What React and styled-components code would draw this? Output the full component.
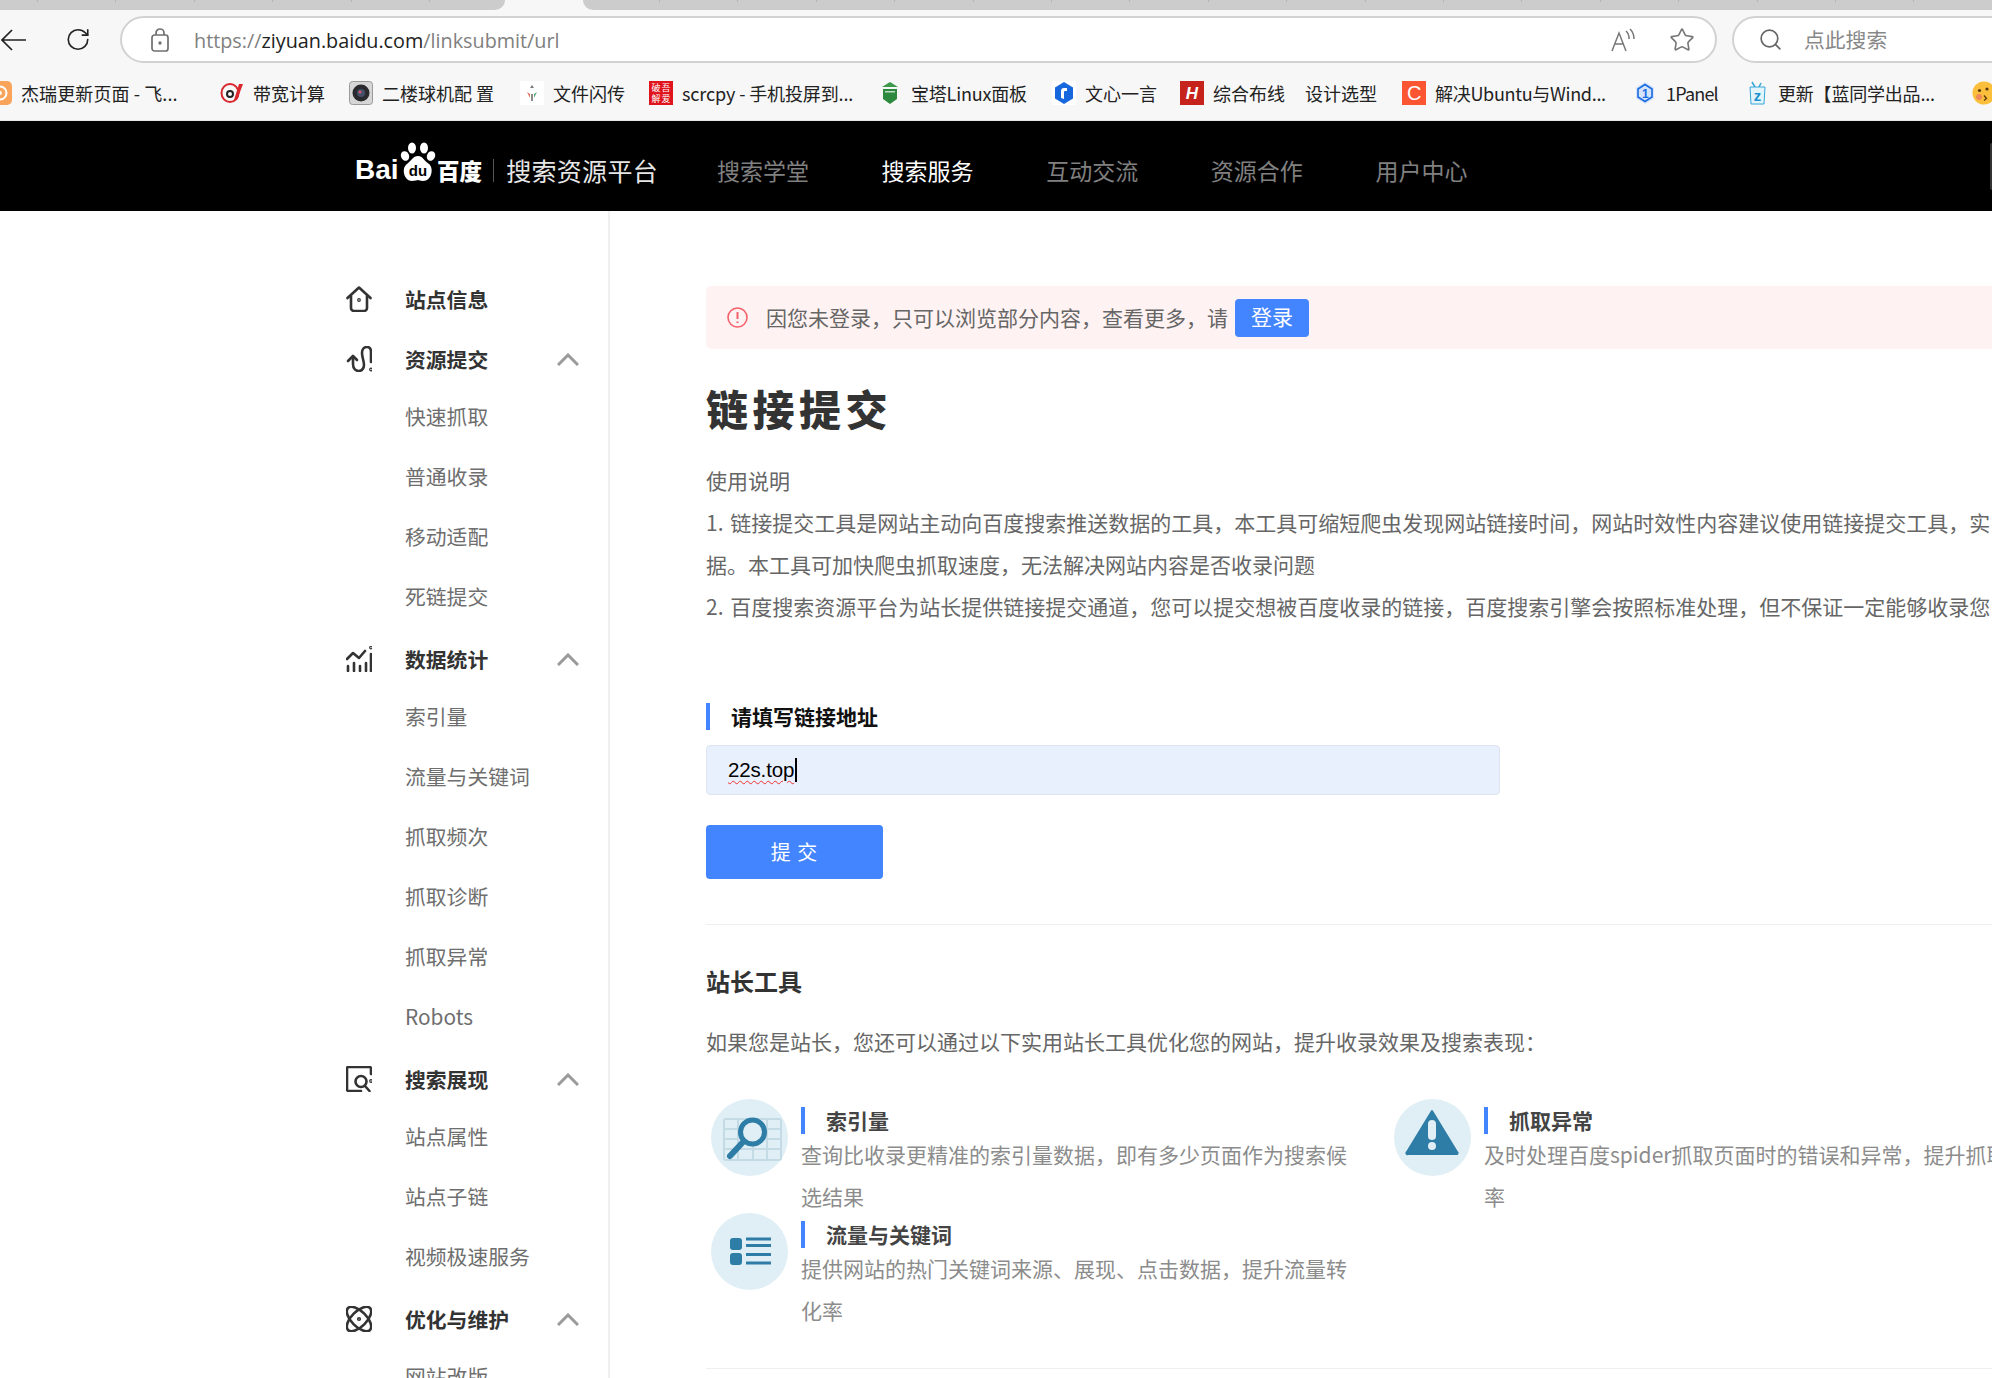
import React from 'react';
import styled, { createGlobalStyle } from 'styled-components';
import { RotateCw, Search, Star } from 'lucide-react';

const GlobalStyle = createGlobalStyle`
  html, body {
    margin: 0;
    padding: 0;
    width: 1992px;
    height: 1378px;
    overflow: hidden;
    background: #fff;
  }
  * {
    box-sizing: border-box;
  }
  body {
    font-family: "Noto Sans CJK SC", "Noto Sans", sans-serif;
  }
`;

const Page = styled.div`
  width: 1992px;
  height: 1378px;
  overflow: hidden;
  display: flex;
  flex-direction: column;
`;

/* browser chrome */
const Chrome = styled.div`
  height: 121px;
  flex: none;
  background: #f7f7f7;
  border-bottom: 1px solid #e6e6e6;
`;

const TabStrip = styled.div`
  height: 10px;
  display: flex;
  gap: 78px;
`;

const Tab = styled.div`
  height: 10px;
  background-color: #cccccc;
  background-image: repeating-linear-gradient(
    to right,
    transparent 0,
    transparent ${(p) => p.$offset}px,
    #b4b4b4 ${(p) => p.$offset}px,
    #b4b4b4 ${(p) => p.$offset + 1}px,
    transparent ${(p) => p.$offset + 1}px,
    transparent 78.4px
  );
  background-size: 100% 2px;
  background-repeat: no-repeat;
  width: ${(p) => p.$width};
  flex: ${(p) => (p.$grow ? 1 : 'none')};
  border-radius: ${(p) => (p.$grow ? '0 0 0 12px' : '0 0 12px 0')};
`;

const AddressRow = styled.div`
  height: 60px;
  display: flex;
  align-items: flex-start;
  padding: 6px 0 0 1px;
`;

const NavButton = styled.div`
  width: 26px;
  height: 47px;
  display: flex;
  align-items: center;
  justify-content: center;
  color: #222;
  margin-right: ${(p) => p.$gap}px;
`;

const AddressBar = styled.div`
  width: 1597px;
  height: 47px;
  flex: none;
  background: #fff;
  border: 2px solid #d2d2d2;
  border-radius: 24px;
  display: flex;
  align-items: center;
  padding: 0 20px 0 29px;
  color: #808080;
`;

const Url = styled.div`
  margin-left: 25px;
  font-family: "Open Sans", "Noto Sans", sans-serif;
  font-size: 19.8px;
  padding-top: 1px;
  color: #808080;
  white-space: nowrap;
  flex: 1;
  b {
    font-weight: 400;
    color: #222;
  }
`;

const BarIcons = styled.div`
  display: flex;
  align-items: center;
  gap: 34px;
`;

const SearchBox = styled.div`
  margin-left: 15px;
  width: 300px;
  height: 47px;
  flex: none;
  background: #fff;
  border: 2px solid #d2d2d2;
  border-radius: 24px;
  display: flex;
  align-items: center;
  padding-left: 24px;
  gap: 21px;
  color: #666;
  font-size: 20.8px;
  span {
    color: #888;
    margin-top: -1px;
  }
`;

const Bookmarks = styled.div`
  height: 50px;
  margin-left: -12px;
  display: flex;
  align-items: center;
  padding-bottom: 4px;
`;

const Bookmark = styled.div`
  width: ${(p) => p.$width}px;
  flex: none;
  display: flex;
  align-items: center;
  gap: 9px;
  font-size: 18px;
  letter-spacing: ${(p) => p.$spacing || 0}px;
  color: #222;
  white-space: nowrap;
  svg {
    flex: none;
  }
`;

/* black site header */
const Header = styled.header`
  height: 90px;
  flex: none;
  background: #000;
  display: flex;
  align-items: center;
  padding: 7px 0 0 355px;
`;

const Logo = styled.div`
  display: flex;
  align-items: center;
  color: #fff;
  height: 40px;
  width: 303px;
  flex: none;
`;

const LogoLatin = styled.span`
  font-family: "Liberation Sans", sans-serif;
  font-weight: 700;
  font-size: 28px;
  width: 43px;
  margin-top: 1px;
`;

const LogoPaw = styled.svg`
  flex: none;
  margin-top: -16px;
`;

const LogoHan = styled.span`
  font-weight: 900;
  font-size: 22.5px;
  margin-left: 1px;
  width: 46px;
  white-space: nowrap;
`;

const LogoDivider = styled.i`
  width: 1px;
  height: 23px;
  background: #555;
  margin: 2px 13px 0 11px;
`;

const LogoTitle = styled.span`
  font-size: 25px;
  letter-spacing: 0.3px;
  color: #e6e6e6;
  white-space: nowrap;
`;

const HeaderLinks = styled.nav`
  display: flex;
  gap: 72.6px;
  margin-left: 59px;
`;

const HeaderLink = styled.a`
  font-size: 23px;
  color: ${(p) => (p.$active ? '#fff' : '#808080')};
  white-space: nowrap;
`;

const HeaderEdge = styled.div`
  margin-left: auto;
  width: 2px;
  height: 47px;
  margin-top: -7px;
  background: #333;
  border-radius: 2px 0 0 2px;
`;

/* page body */
const Body = styled.div`
  flex: 1;
  display: flex;
  min-height: 0;
`;

const Sidebar = styled.aside`
  width: 610px;
  flex: none;
  border-right: 2px solid #f0f0f0;
  padding: 61px 29px 0 346px;
`;

const MenuGroup = styled.div`
  margin-bottom: 6px;
`;

const MenuHead = styled.div`
  height: 54px;
  display: flex;
  align-items: center;
  color: #333;
  font-size: 20.8px;
  font-weight: 700;
  svg.menu-icon {
    margin-right: 33px;
    flex: none;
  }
  svg.chevron {
    margin-left: auto;
  }
`;

const MenuItem = styled.div`
  height: 60px;
  line-height: 60px;
  padding-left: 59px;
  font-size: 20.8px;
  color: #6e6e6e;
  white-space: nowrap;
`;

const Main = styled.main`
  flex: 1;
  min-width: 0;
  overflow: hidden;
  padding: 75px 0 0 96px;
`;

const Alert = styled.div`
  height: 63px;
  background: #fff2f2;
  border-radius: 5px 0 0 5px;
  display: flex;
  align-items: center;
  padding: 0 0 0 21px;
  color: #666;
  font-size: 21px;
  line-height: 59px;
  white-space: nowrap;
  svg {
    margin-right: 18px;
  }
`;

const LoginButton = styled.span`
  margin-left: 7px;
  width: 74px;
  height: 38px;
  line-height: 35px;
  text-align: center;
  color: #fff;
  background: #4285ff;
  border-radius: 4px;
`;

const Title = styled.h1`
  margin: 29px 0 0;
  height: 60px;
  line-height: 60px;
  font-size: 42px;
  letter-spacing: 4.5px;
  font-weight: 900;
  color: #333;
`;

const Guide = styled.div`
  margin-top: 21px;
  font-size: 21px;
  line-height: 42px;
  word-spacing: 2px;
  color: #666;
  white-space: nowrap;
`;

const FieldLabel = styled.div`
  margin-top: 76px;
  height: 27px;
  line-height: 27px;
  border-left: 4px solid #4285ff;
  padding-left: 21px;
  font-size: 21px;
  font-weight: 700;
  color: #111;
`;

const Field = styled.div`
  margin-top: 15px;
  width: 794px;
  height: 50px;
  background: #e8f0fe;
  border: 1px solid #dfe4ee;
  border-radius: 4px;
  display: flex;
  align-items: center;
  padding-left: 21px;
  font-family: "Liberation Sans", sans-serif;
  font-size: 20.5px;
  letter-spacing: -0.15px;
  color: #000;
`;

const Misspelled = styled.span`
  text-decoration: underline wavy #f03030 1px;
  text-underline-offset: 3px;
`;

const Caret = styled.i`
  width: 2px;
  height: 24px;
  margin-left: 1px;
  background: #000;
`;

const SubmitButton = styled.div`
  margin-top: 30px;
  width: 177px;
  height: 54px;
  line-height: 54px;
  text-align: center;
  background: #4285ff;
  border-radius: 4px;
  color: #fff;
  font-size: 20px;
  letter-spacing: 1px;
`;

const Rule = styled.div`
  height: 1px;
  background: #eeeeee;
  margin-top: ${(p) => p.$top}px;
`;

const SectionTitle = styled.h2`
  margin: 36px 0 0;
  height: 40px;
  line-height: 40px;
  font-size: 24px;
  font-weight: 700;
  color: #333;
`;

const SectionText = styled.p`
  margin: 19px 0 0;
  line-height: 42px;
  font-size: 21px;
  color: #666;
  white-space: nowrap;
`;

const ToolGrid = styled.div`
  margin-top: 37px;
  display: grid;
  grid-template-columns: 683px 600px;
  grid-auto-rows: 114px;
`;

const Tool = styled.div`
  display: flex;
  align-items: flex-start;
  padding-left: 5px;
`;

const ToolDisc = styled.div`
  width: 77px;
  height: 77px;
  flex: none;
  border-radius: 50%;
  background: #e0eff5;
  margin-right: 13px;
`;

const ToolBody = styled.div`
  width: 546px;
  flex: none;
  padding-top: 8px;
`;

const ToolName = styled.div`
  height: 27px;
  line-height: 27px;
  border-left: 4px solid #4285ff;
  padding-left: 21px;
  font-size: 21px;
  font-weight: 700;
  color: #444;
`;

const ToolText = styled.div`
  margin-top: -1px;
  line-height: 42px;
  font-size: 21px;
  color: #8c8c8c;
`;

const Icon26 = ({ children }) => (
  <svg className="menu-icon" width="26" height="26" viewBox="0 0 26 26" fill="none" stroke="#333" strokeWidth="2.6" strokeLinecap="round" strokeLinejoin="round">
    {children}
  </svg>
);

const menuIcons = {
  home: (
    <Icon26>
      <path d="M1.500 12 13 1.500 24.500 12" />
      <path d="M5 10v12a3 3 0 0 0 3 3h10a3 3 0 0 0 3-3V10" />
      <circle cx="13" cy="14" r=".6" />
    </Icon26>
  ),
  submit: (
    <Icon26>
      <path d="M2 15l5-5 4 4" />
      <path d="M7 11v7c0 5 3 7 6 7s5-3 5-6c0-4-2-8-2-12s2-6 5-6 4 2 4 5v10" />
      <circle cx="25" cy="23.500" r=".6" />
    </Icon26>
  ),
  stats: (
    <Icon26>
      <path d="M1 13l6-6 6 5 6-7" />
      <circle cx="25" cy="1.500" r=".6" />
      <path d="M2 20v5M8 17v8M14 20v5M20 17v8M25 8v17" />
    </Icon26>
  ),
  search: (
    <Icon26>
      <path d="M25 8V2.500A1.500 1.500 0 0 0 23.500 1h-21A1.500 1.500 0 0 0 1 2.500v21A1.500 1.500 0 0 0 2.500 25H15" />
      <circle cx="15" cy="15.500" r="5.500" />
      <path d="M19 20l4.500 5" />
      <circle cx="25" cy="15" r=".6" />
    </Icon26>
  ),
  optimize: (
    <Icon26>
      <ellipse cx="13" cy="13" rx="15.500" ry="7.500" transform="rotate(45 13 13)" />
      <ellipse cx="13" cy="13" rx="15.500" ry="7.500" transform="rotate(-45 13 13)" />
      <circle cx="13" cy="13" r=".8" />
    </Icon26>
  ),
};

const Chevron = () => (
  <svg className="chevron" width="22" height="13" viewBox="0 0 22 13" fill="none" stroke="#9a9a9a" strokeWidth="3">
    <path d="M1 12 11 2l10 10" />
  </svg>
);

const bookmarkIcons = {
  orange: (
    <svg width="24" height="24" viewBox="0 0 24 24">
      <rect width="24" height="24" rx="5" fill="#f9a45a" />
      <circle cx="12" cy="12" r="6.500" fill="none" stroke="#fff" strokeWidth="2" />
      <circle cx="12" cy="12" r="2" fill="#fff" />
    </svg>
  ),
  at: (
    <svg width="24" height="24" viewBox="0 0 24 24">
      <ellipse cx="10" cy="12" rx="8.500" ry="9" fill="none" stroke="#d8272d" strokeWidth="2" />
      <circle cx="10" cy="13" r="3" fill="none" stroke="#222" strokeWidth="2" />
      <path d="M19 3h4l-6 16h-3z" fill="#d8272d" />
    </svg>
  ),
  camera: (
    <svg width="24" height="24" viewBox="0 0 24 24">
      <rect x=".5" y=".5" width="23" height="23" rx="3" fill="#d6d6d6" stroke="#9a9a9a" />
      <circle cx="12" cy="12" r="8.500" fill="#2a2a2e" />
      <circle cx="12" cy="12" r="4" fill="#44506a" />
      <circle cx="11" cy="11" r="1.500" fill="#d9566a" />
    </svg>
  ),
  flash: (
    <svg width="24" height="24" viewBox="0 0 24 24">
      <rect width="24" height="24" fill="#fff" />
      <path d="M12 4l2 3h-4z" fill="#7a7a7a" />
      <path d="M7 11l3 2v4z" fill="#e0705a" />
      <path d="M17 11l-3 2v4z" fill="#58a878" />
      <path d="M11 13h2v7h-2z" fill="#8a8a8a" />
    </svg>
  ),
  seal: (
    <svg width="24" height="24" viewBox="0 0 24 24">
      <rect width="24" height="24" fill="#e0141c" />
      <g fill="#fff" fontSize="9" fontFamily="Noto Sans CJK SC">
        <text x="2.500" y="10">破</text>
        <text x="12.500" y="10">吾</text>
        <text x="2.500" y="21">解</text>
        <text x="12.500" y="21">爱</text>
      </g>
    </svg>
  ),
  shield: (
    <svg width="24" height="24" viewBox="0 0 24 24">
      <path d="M12 1 20 6H4z" fill="#3d9a4c" />
      <path d="M5 8h14v10l-7 5-7-5z" fill="#2c8a3e" />
      <path d="M7 10h10v1.500H7z" fill="#fff" opacity=".7" />
    </svg>
  ),
  wenxin: (
    <svg width="24" height="24" viewBox="0 0 24 24">
      <rect width="24" height="24" fill="#fff" />
      <path d="M12 1 21 6.500v11L12 23l-9-5.500v-11z" fill="#1668dc" />
      <path d="M9 17V10a3 3 0 0 1 3-3h3v3h-2a1 1 0 0 0-1 1v7z" fill="#fff" />
    </svg>
  ),
  hsquare: (
    <svg width="24" height="24" viewBox="0 0 24 24">
      <rect width="24" height="24" fill="#c6231c" />
      <text x="12" y="18" fill="#fff" fontSize="17" fontWeight="700" fontStyle="italic" textAnchor="middle" fontFamily="Liberation Sans">H</text>
    </svg>
  ),
  csquare: (
    <svg width="24" height="24" viewBox="0 0 24 24">
      <rect width="24" height="24" fill="#fc5531" />
      <text x="12" y="19" fill="#fff" fontSize="20" textAnchor="middle" fontFamily="Liberation Sans">C</text>
    </svg>
  ),
  panel: (
    <svg width="24" height="24" viewBox="0 0 24 24">
      <path d="M12 1 21 6.500v11L12 23l-9-5.500v-11z" fill="#d5e4fb" />
      <path d="M12 3.500 19 8v8l-7 4.500L5 16V8z" fill="none" stroke="#1a6ae0" strokeWidth="1.600" />
      <text x="12" y="16.500" fill="#1a6ae0" fontSize="12" fontWeight="700" textAnchor="middle" fontFamily="Liberation Sans">1</text>
    </svg>
  ),
  tv: (
    <svg width="24" height="24" viewBox="0 0 24 24">
      <path d="M7 1l3 5M16 2l-2 4" stroke="#35a6d8" strokeWidth="1.500" />
      <path d="M5 6h15l-1 17H6z" fill="#e3f4fb" stroke="#35a6d8" />
      <text x="12.500" y="20" fill="#1d92cc" fontSize="15" fontWeight="700" textAnchor="middle" fontFamily="Liberation Sans">z</text>
    </svg>
  ),
  face: (
    <svg width="24" height="24" viewBox="0 0 24 24">
      <circle cx="12" cy="12" r="11.500" fill="#fbbf3c" />
      <circle cx="7.500" cy="9.500" r="1.600" fill="#5b3a12" />
      <circle cx="15" cy="8" r="1.600" fill="#5b3a12" />
      <circle cx="7" cy="16" r="3" fill="#f08a5a" />
      <path d="M12 14.500l2.500 3-2.500 2" fill="none" stroke="#5b3a12" strokeWidth="1.300" />
    </svg>
  ),
};

const bookmarks = [
  { icon: 'orange', text: '杰瑞更新页面 - 飞...', width: 232, spacing: 0.1 },
  { icon: 'at', text: '带宽计算', width: 129 },
  { icon: 'camera', text: '二楼球机配 置', width: 171 },
  { icon: 'flash', text: '文件闪传', width: 129 },
  { icon: 'seal', text: 'scrcpy - 手机投屏到...', width: 229, spacing: -0.13 },
  { icon: 'shield', text: '宝塔Linux面板', width: 174, spacing: -0.2 },
  { icon: 'wenxin', text: '文心一言', width: 128 },
  { icon: 'hsquare', text: '综合布线', width: 125 },
  { text: '设计选型', width: 97 },
  { icon: 'csquare', text: '解决Ubuntu与Wind...', width: 231, spacing: -0.3 },
  { icon: 'panel', text: '1Panel', width: 112, spacing: -0.8 },
  { icon: 'tv', text: '更新【蓝同学出品...', width: 227, spacing: -0.2 },
  { icon: 'face', text: '', width: 24 },
];

const menu = [
  { icon: 'home', title: '站点信息' },
  { icon: 'submit', title: '资源提交', items: ['快速抓取', '普通收录', '移动适配', '死链提交'] },
  { icon: 'stats', title: '数据统计', items: ['索引量', '流量与关键词', '抓取频次', '抓取诊断', '抓取异常', 'Robots'] },
  { icon: 'search', title: '搜索展现', items: ['站点属性', '站点子链', '视频极速服务'] },
  { icon: 'optimize', title: '优化与维护', items: ['网站改版'] },
];

const IndexArt = () => (
  <svg width="77" height="77" viewBox="0 0 77 77">
    <g fill="none" stroke="#c4dbe6" strokeWidth="2">
      <rect x="13" y="20" width="57" height="41" rx="2" />
      <path d="M13 30h57M13 40h57M13 50h57M27 20v41M42 20v41M56 20v41" />
    </g>
    <circle cx="41.500" cy="33" r="12" fill="#e0eff5" stroke="#2e7da6" strokeWidth="5" />
    <path d="M32 43 19 57" stroke="#2e7da6" strokeWidth="6" strokeLinecap="round" />
  </svg>
);

const ListArt = () => (
  <svg width="77" height="77" viewBox="0 0 77 77" fill="#2e7da6">
    <rect x="19" y="25" width="12" height="12" rx="3" />
    <rect x="19" y="40" width="12" height="12" rx="3" />
    <path d="M35 24.500h25v3H35zM35 31h25v3H35zM35 40h25v3H35zM35 48.500h25v3H35z" />
  </svg>
);

const WarnArt = () => (
  <svg width="77" height="77" viewBox="0 0 77 77">
    <path d="M38 12 63 53a1 1 0 0 1-1 2H14a1 1 0 0 1-1-2z" fill="#2e7da6" stroke="#2e7da6" strokeWidth="2" strokeLinejoin="round" />
    <rect x="34" y="21" width="8" height="20" rx="4" fill="#e0eff5" />
    <circle cx="38" cy="47" r="4" fill="#e0eff5" />
  </svg>
);

export default function App() {
  return (
    <Page>
      <GlobalStyle />
      <Chrome>
        <TabStrip>
          <Tab $width="505px" $offset={37} />
          <Tab $grow $offset={76} />
        </TabStrip>
        <AddressRow>
          <NavButton $gap={39}>
            <svg width="25" height="24" viewBox="0 0 25 24" fill="none" stroke="#222" strokeWidth="1.700">
              <path d="M25 12H1M11 2 1 12l10 10" />
            </svg>
          </NavButton>
          <NavButton $gap={29}>
            <RotateCw size={29} strokeWidth={1.5} />
          </NavButton>
          <AddressBar>
            <svg width="18" height="24" viewBox="0 0 18 24" fill="none" stroke="#707070" strokeWidth="1.700">
              <rect x="1" y="7" width="16" height="16" rx="2.500" />
              <path d="M5 7V5a4 4 0 0 1 8 0v2" />
              <circle cx="9" cy="15" r=".8" fill="#707070" />
            </svg>
            <Url>
              https://<b>ziyuan.baidu.com</b>/linksubmit/url
            </Url>
            <BarIcons>
              <svg width="24" height="24" viewBox="0 0 24 24" fill="none" stroke="#777" strokeWidth="1.500">
                <path d="M1 23 8 5l7 18M4 16h8" />
                <path d="M15 3a10 10 0 0 1 3 8M19 1a14 14 0 0 1 4 10" />
              </svg>
              <Star size={26} strokeWidth={1.5} color="#777" />
            </BarIcons>
          </AddressBar>
          <SearchBox>
            <Search size={25} strokeWidth={1.6} />
            <span>点此搜索</span>
          </SearchBox>
        </AddressRow>
        <Bookmarks>
          {bookmarks.map((b, i) => (
            <Bookmark key={i} $width={b.width} $spacing={b.spacing}>
              {b.icon && bookmarkIcons[b.icon]}
              {b.text}
            </Bookmark>
          ))}
        </Bookmarks>
      </Chrome>

      <Header>
        <Logo>
          <LogoLatin>Bai</LogoLatin>
          <LogoPaw width="38" height="40" viewBox="0 0 38 40">
            <ellipse cx="7" cy="14" rx="4" ry="5" fill="#fff" transform="rotate(-25 7 14)" />
            <ellipse cx="14" cy="6" rx="4" ry="5.500" fill="#fff" />
            <ellipse cx="26" cy="6" rx="4" ry="5.500" fill="#fff" />
            <ellipse cx="33" cy="14" rx="4" ry="5" fill="#fff" transform="rotate(25 33 14)" />
            <path d="M20 14c5 0 6 5 11 8 5 4 3 17-6 17-3 0-4-1-5-1s-3 1-6 1C6 39 3 26 9 22c4-3 6-8 11-8z" fill="#fff" />
            <text x="20" y="34" textAnchor="middle" fontSize="15" fontWeight="700" fontFamily="Liberation Sans" fill="#000">du</text>
          </LogoPaw>
          <LogoHan>百度</LogoHan>
          <LogoDivider />
          <LogoTitle>搜索资源平台</LogoTitle>
        </Logo>
        <HeaderLinks>
          <HeaderLink>搜索学堂</HeaderLink>
          <HeaderLink $active>搜索服务</HeaderLink>
          <HeaderLink>互动交流</HeaderLink>
          <HeaderLink>资源合作</HeaderLink>
          <HeaderLink>用户中心</HeaderLink>
        </HeaderLinks>
        <HeaderEdge />
      </Header>

      <Body>
        <Sidebar>
          {menu.map((group) => (
            <MenuGroup key={group.title}>
              <MenuHead>
                {menuIcons[group.icon]}
                {group.title}
                {group.items && <Chevron />}
              </MenuHead>
              {(group.items || []).map((item) => (
                <MenuItem key={item}>{item}</MenuItem>
              ))}
            </MenuGroup>
          ))}
        </Sidebar>

        <Main>
          <Alert>
            <svg width="21" height="21" viewBox="0 0 21 21" fill="none" stroke="#f2606a" strokeWidth="1.600">
              <circle cx="10.500" cy="10.500" r="9.500" />
              <path d="M10.500 5v7M10.500 14.500v1.600" strokeWidth="2" />
            </svg>
            因您未登录，只可以浏览部分内容，查看更多，请
            <LoginButton>登录</LoginButton>
          </Alert>
          <Title>链接提交</Title>
          <Guide>
            <div>使用说明</div>
            <div>1. 链接提交工具是网站主动向百度搜索推送数据的工具，本工具可缩短爬虫发现网站链接时间，网站时效性内容建议使用链接提交工具，实</div>
            <div>据。本工具可加快爬虫抓取速度，无法解决网站内容是否收录问题</div>
            <div>2. 百度搜索资源平台为站长提供链接提交通道，您可以提交想被百度收录的链接，百度搜索引擎会按照标准处理，但不保证一定能够收录您</div>
          </Guide>
          <FieldLabel>请填写链接地址</FieldLabel>
          <Field>
            <Misspelled>22s.top</Misspelled>
            <Caret />
          </Field>
          <SubmitButton>提 交</SubmitButton>
          <Rule $top={45} />
          <SectionTitle>站长工具</SectionTitle>
          <SectionText>如果您是站长，您还可以通过以下实用站长工具优化您的网站，提升收录效果及搜索表现：</SectionText>
          <ToolGrid>
            <Tool>
              <ToolDisc><IndexArt /></ToolDisc>
              <ToolBody>
                <ToolName>索引量</ToolName>
                <ToolText>查询比收录更精准的索引量数据，即有多少页面作为搜索候选结果</ToolText>
              </ToolBody>
            </Tool>
            <Tool>
              <ToolDisc><WarnArt /></ToolDisc>
              <ToolBody>
                <ToolName>抓取异常</ToolName>
                <ToolText>及时处理百度spider抓取页面时的错误和异常，提升抓取频率</ToolText>
              </ToolBody>
            </Tool>
            <Tool>
              <ToolDisc><ListArt /></ToolDisc>
              <ToolBody>
                <ToolName>流量与关键词</ToolName>
                <ToolText>提供网站的热门关键词来源、展现、点击数据，提升流量转化率</ToolText>
              </ToolBody>
            </Tool>
          </ToolGrid>
          <Rule $top={41} />
        </Main>
      </Body>
    </Page>
  );
}
